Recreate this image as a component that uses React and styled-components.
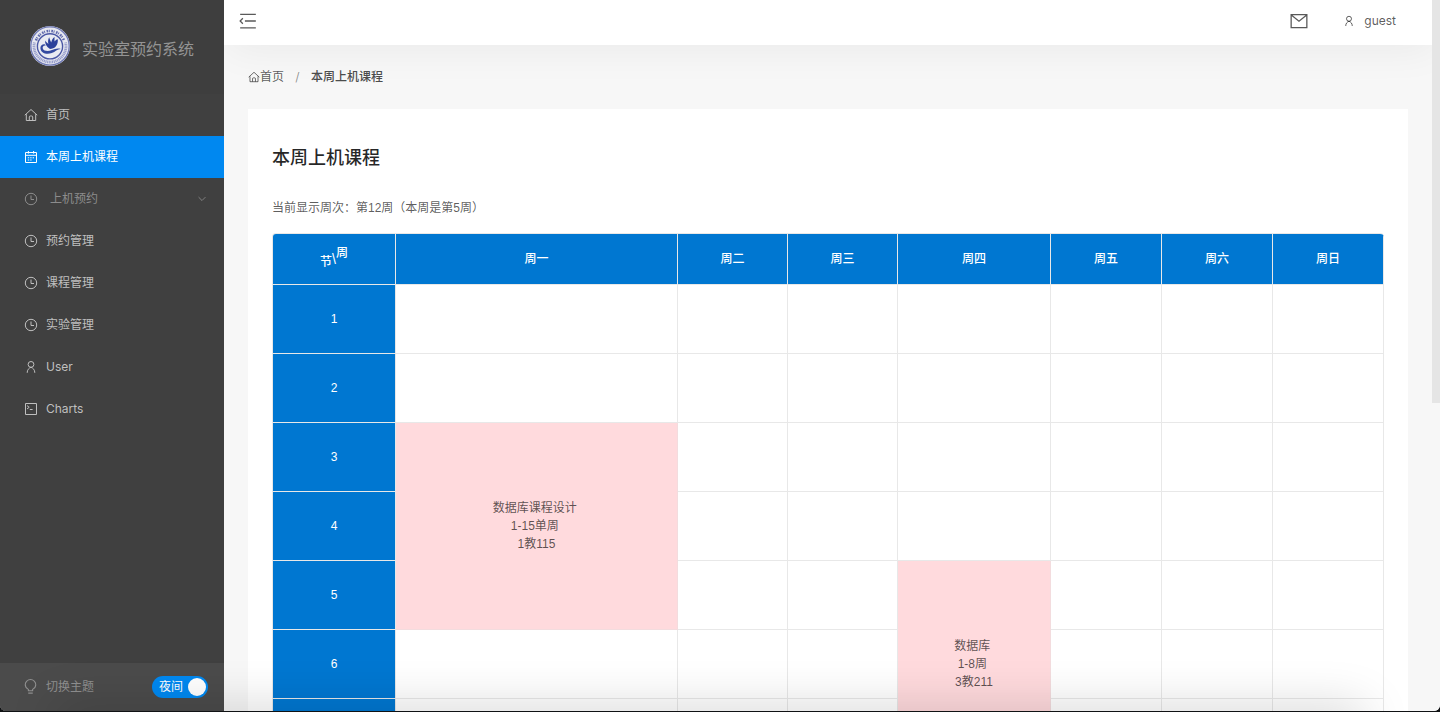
import React from "react";
import styled, { createGlobalStyle, css } from "styled-components";

const Global = createGlobalStyle`
  * { box-sizing: border-box; }
  body {
    margin: 0;
    overflow: hidden;
    background: #101214;
    color: rgba(0, 0, 0, 0.65);
    font: 12px/18px Inter, "Noto Sans CJK SC", sans-serif;
  }
  h2, p { margin: 0; }
`;

const Window = styled.div`
  position: relative;
  display: flex;
  height: 711px;
  overflow: hidden;
  background: #f7f7f7;
  border-radius: 0 0 6px 6px;
`;

const Sidebar = styled.aside`
  display: flex;
  flex-direction: column;
  flex: 0 0 224px;
  z-index: 1;
  background: #404040;
`;

const Brand = styled.div`
  display: flex;
  align-items: center;
  gap: 12px;
  height: 94px;
  padding: 0 0 2px 30px;
  background: #3e3e3e;
`;

const BrandName = styled.span`
  padding-top: 6px;
  font-size: 16px;
  line-height: 24px;
  color: #949494;
`;

const Menu = styled.nav`
  flex: 1;
`;

const MenuItem = styled.div`
  display: flex;
  align-items: center;
  gap: ${(p) => (p.$group ? 12 : 8)}px;
  height: 42px;
  padding: 0 16px 0 24px;
  color: ${(p) => (p.$active ? "#fff" : p.$group ? "#8c8c8c" : "#bfbfbf")};
  ${(p) => p.$active && css`background: #0088f0;`}

  > svg:first-child {
    margin-bottom: 1px;
  }
`;

const Label = styled.span`
  flex: 1;
`;

const Icon = styled.svg.attrs({ viewBox: "0 0 14 14", fill: "none", stroke: "currentColor" })`
  flex: none;
  width: ${(p) => p.$size || 14}px;
  height: ${(p) => p.$size || 14}px;
  stroke-width: ${(p) => p.$weight || 1};
`;

const ThemeBar = styled.div`
  display: flex;
  align-items: center;
  gap: 8px;
  height: 48px;
  padding: 0 16px 0 23px;
  background: #4b4b4b;
  color: #8f8f8f;

  > svg {
    margin-bottom: 2px;
  }
`;

const Toggle = styled.div`
  display: flex;
  align-items: center;
  justify-content: space-between;
  width: 56px;
  height: 22px;
  padding: 0 2px 0 7px;
  border-radius: 11px;
  background: #0088f0;
  color: #fff;
`;

const Knob = styled.i`
  width: 18px;
  height: 18px;
  border-radius: 50%;
  background: #fff;
`;

const Main = styled.main`
  flex: 1;
  min-width: 0;
`;

const Header = styled.header`
  display: flex;
  align-items: center;
  height: 45px;
  padding: 0 36px 3px 15px;
  background: #fff;
  box-shadow: 4px 4px 40px 0 rgba(0, 0, 0, 0.06);
`;

const HeaderTools = styled.div`
  display: flex;
  align-items: center;
  margin-left: auto;
  gap: 35px;
`;

const UserMenu = styled.div`
  display: flex;
  align-items: center;
  gap: 9px;
`;

const Breadcrumb = styled.div`
  display: flex;
  align-items: center;
  height: 64px;
  padding: 0 24px;

  > svg {
    margin-bottom: 1px;
  }
`;

const Separator = styled.span`
  width: 27px;
  text-align: center;
  color: rgba(0, 0, 0, 0.43);
`;

const Current = styled.span`
  font-weight: 500;
  color: #4c4c4c;
`;

const Card = styled.section`
  margin: 0 24px;
  height: 900px;
  padding: 34px 24px;
  background: #fff;
`;

const Title = styled.h2`
  font-size: 18px;
  line-height: 30px;
  font-weight: 500;
  color: rgba(0, 0, 0, 0.85);
`;

const Week = styled.p`
  padding: 26px 0 16px;
  font-family: "Liberation Sans", "Noto Sans CJK SC", sans-serif;
`;

const Timetable = styled.div`
  display: grid;
  grid-template-columns: 123px 282px 110px 110px 153px 111px 111px 111px;
  grid-template-rows: 51px repeat(8, 69px);
  border: solid #e8e8e8;
  border-width: 1px 0 0 1px;
  border-radius: 4px 4px 0 0;
  overflow: hidden;
  font-family: "Liberation Sans", "Noto Sans CJK SC", sans-serif;
`;

const Cell = styled.div`
  display: flex;
  align-items: center;
  justify-content: center;
  grid-area: ${(p) => p.$row} / ${(p) => p.$col} / span ${(p) => p.$span || 1};
  border: solid #e8e8e8;
  border-width: 0 1px 1px 0;
  text-align: center;
  white-space: pre;
`;

const HeadCell = styled(Cell)`
  background: #0077d1;
  color: #fff;
  font-weight: ${(p) => (p.$row === 1 ? 500 : 400)};
`;

const CourseCell = styled(Cell)`
  background: #ffdadd;
  border-color: #f3dcde;
`;

const Corner = styled.span`
  display: flex;
  align-items: center;
`;

const Slash = styled.span`
  font-size: 14px;
`;

const Raised = styled.span`
  padding-bottom: 13px;
`;

const Lowered = styled.span`
  padding-top: 5px;
`;

const Scrollbar = styled.div`
  flex: 0 0 8px;
  z-index: 1;
  background: #f7f7f7;
`;

const Thumb = styled.div`
  height: 403px;
  background: #e5e5e5;
`;

const BottomShade = styled.div`
  position: absolute;
  z-index: 2;
  left: 60px;
  right: 80px;
  bottom: -30px;
  height: 30px;
  box-shadow: 0 0 48px 4px rgba(0, 0, 0, 0.17);
  pointer-events: none;
`;

const shapes = {
  home: <path d="M.8 7.2 7 1.5l6.2 5.7M2.3 6.2v6.3h9.4V6.2M5.3 12.3V9a1 1 0 0 1 1-1h1.4a1 1 0 0 1 1 1v3.3" />,
  calendar: (
    <>
      <path d="M1.5 2.5h11v10h-11zM1.5 5.3h11M4.4 1v2.6M9.6 1v2.6" />
      <path d="M3.8 7.8h6.6M3.8 10h4.6" strokeDasharray="1.4 1" />
    </>
  ),
  clock: (
    <>
      <circle cx="7" cy="7" r="5.7" />
      <path d="M7 3.5v4h3" />
    </>
  ),
  user: (
    <>
      <circle cx="7" cy="4.4" r="2.9" />
      <path d="M3.2 12.8c0-3 1.7-4.8 3.8-5.5 2.1.7 3.8 2.5 3.8 5.5" />
    </>
  ),
  code: (
    <>
      <path d="M1.5 1.5h11v11h-11z" />
      <path d="m3 3.6 2.2 1.7L3 7M5.8 7.5h2.8" />
    </>
  ),
  down: <path d="m3 4.8 4 4 4-4" />,
  bulb: <path d="M5 9.7C3.3 8.8 2.1 7.4 2.1 5.4a4.9 4.9 0 0 1 9.8 0c0 2-1.2 3.4-2.9 4.3v1.2H5zM4.9 13.2h4.2" />,
  mail: <path d="M.9 2h12.2v10.1H.9zM1 2.3l6 4.8 6-4.8" />,
  fold: <path d="M.9 1.9h12.2M4.6 7h8.5M.9 12.4h12.2M3 4.9.9 7 3 9.1" />,
};

const Glyph = ({ name, size, weight }) => (
  <Icon $size={size} $weight={weight}>{shapes[name]}</Icon>
);

const Seal = () => (
  <svg width="40" height="40" viewBox="0 0 40 40" fill="none">
    <circle cx="20" cy="20" r="20" fill="#e6e7f0" />
    <circle cx="20" cy="20" r="19.2" stroke="#6f79b5" strokeWidth="1.3" />
    <path d="M6 14.4A15.1 15.1 0 0 1 34 14.4" stroke="#5d68ab" strokeWidth="2.6" strokeDasharray="1.6 .7 .9 1.6" />
    <path d="M4.4 16.5A16 16 0 1 0 35.6 16.5" stroke="#949bc9" strokeWidth="2.8" strokeDasharray="1.1 .6" />
    <circle cx="20" cy="20.3" r="12.6" fill="#e9ebf2" stroke="#4a57a4" strokeWidth="1.4" />
    <path d="M19.6 22.8c-3.3-2.4-4.6-5.1-4.6-8.3 1.3 1.8 2.4 2.7 3.4 3.5-.6-2.4-.3-4.7.8-6.7.7 2.5 1.3 4 2.1 5.2.2-2.3 1.3-4.4 3.3-5.6-.2 2-.1 3.4 0 4.6.8-1.2 1.8-1.8 3.2-2.2.4 4.8-1.9 8.9-6.2 9.5-.8.1-1.5.1-2 0Z" fill="#2a409a" />
    <path d="M10.4 22c-.1-3.4 4.4-5 5.4-2.5-2.2-.4-3.6 1.3-3 3 1.1 3 5.6 3 9.2 1.6 2.8-1.1 5.3-2.5 8.8-1.2-3.6.2-5.4 2.7-9 4.1-5.5 2.1-11.3-.2-11.4-5Z" fill="#344aa0" />
  </svg>
);

const menu = [
  { icon: "home", label: "首页" },
  { icon: "calendar", label: "本周上机课程", active: true },
  { icon: "clock", label: "上机预约", group: true },
  { icon: "clock", label: "预约管理" },
  { icon: "clock", label: "课程管理" },
  { icon: "clock", label: "实验管理" },
  { icon: "user", label: "User" },
  { icon: "code", label: "Charts" },
];

const days = ["周一", "周二", "周三", "周四", "周五", "周六", "周日"];
const periods = [1, 2, 3, 4, 5, 6, 7, 8];
const courses = [
  { day: 1, period: 3, span: 3, text: "数据库课程设计 \n1-15单周 \n1教115" },
  { day: 4, period: 5, span: 3, text: "数据库 \n1-8周 \n3教211" },
];

const courseAt = (day, period) =>
  courses.find((c) => c.day === day && period >= c.period && period < c.period + c.span);

export default function App() {
  return (
    <>
      <Global />
      <Window>
        <Sidebar>
          <Brand>
            <Seal />
            <BrandName>实验室预约系统</BrandName>
          </Brand>
          <Menu>
            {menu.map((m) => (
              <MenuItem key={m.label} $active={m.active} $group={m.group}>
                <Glyph name={m.icon} />
                <Label>{m.label}</Label>
                {m.group && <Glyph name="down" size={12} />}
              </MenuItem>
            ))}
          </Menu>
          <ThemeBar>
            <Glyph name="bulb" size={15} />
            <Label>切换主题</Label>
            <Toggle>夜间<Knob /></Toggle>
          </ThemeBar>
        </Sidebar>
        <Main>
          <Header>
            <Glyph name="fold" size={18} />
            <HeaderTools>
              <Glyph name="mail" size={18} />
              <UserMenu>
                <Glyph name="user" size={12} weight={1.1} />
                guest
              </UserMenu>
            </HeaderTools>
          </Header>
          <Breadcrumb>
            <Glyph name="home" size={12} />
            首页
            <Separator>/</Separator>
            <Current>本周上机课程</Current>
          </Breadcrumb>
          <Card>
            <Title>本周上机课程</Title>
            <Week>当前显示周次：第12周（本周是第5周）</Week>
            <Timetable>
              <HeadCell $row={1} $col={1}>
                <Corner>
                  <Lowered>节</Lowered><Slash>\</Slash><Raised>周</Raised>
                </Corner>
              </HeadCell>
              {days.map((d, i) => (
                <HeadCell key={d} $row={1} $col={i + 2}>{d}</HeadCell>
              ))}
              {periods.map((n) => (
                <React.Fragment key={n}>
                  <HeadCell $row={n + 1} $col={1}>{n}</HeadCell>
                  {days.map((d, i) =>
                    courseAt(i + 1, n) ? null : <Cell key={d} $row={n + 1} $col={i + 2} />
                  )}
                </React.Fragment>
              ))}
              {courses.map((c) => (
                <CourseCell key={c.text} $row={c.period + 1} $col={c.day + 1} $span={c.span}>
                  {c.text}
                </CourseCell>
              ))}
            </Timetable>
          </Card>
        </Main>
        <Scrollbar><Thumb /></Scrollbar>
        <BottomShade />
      </Window>
    </>
  );
}
